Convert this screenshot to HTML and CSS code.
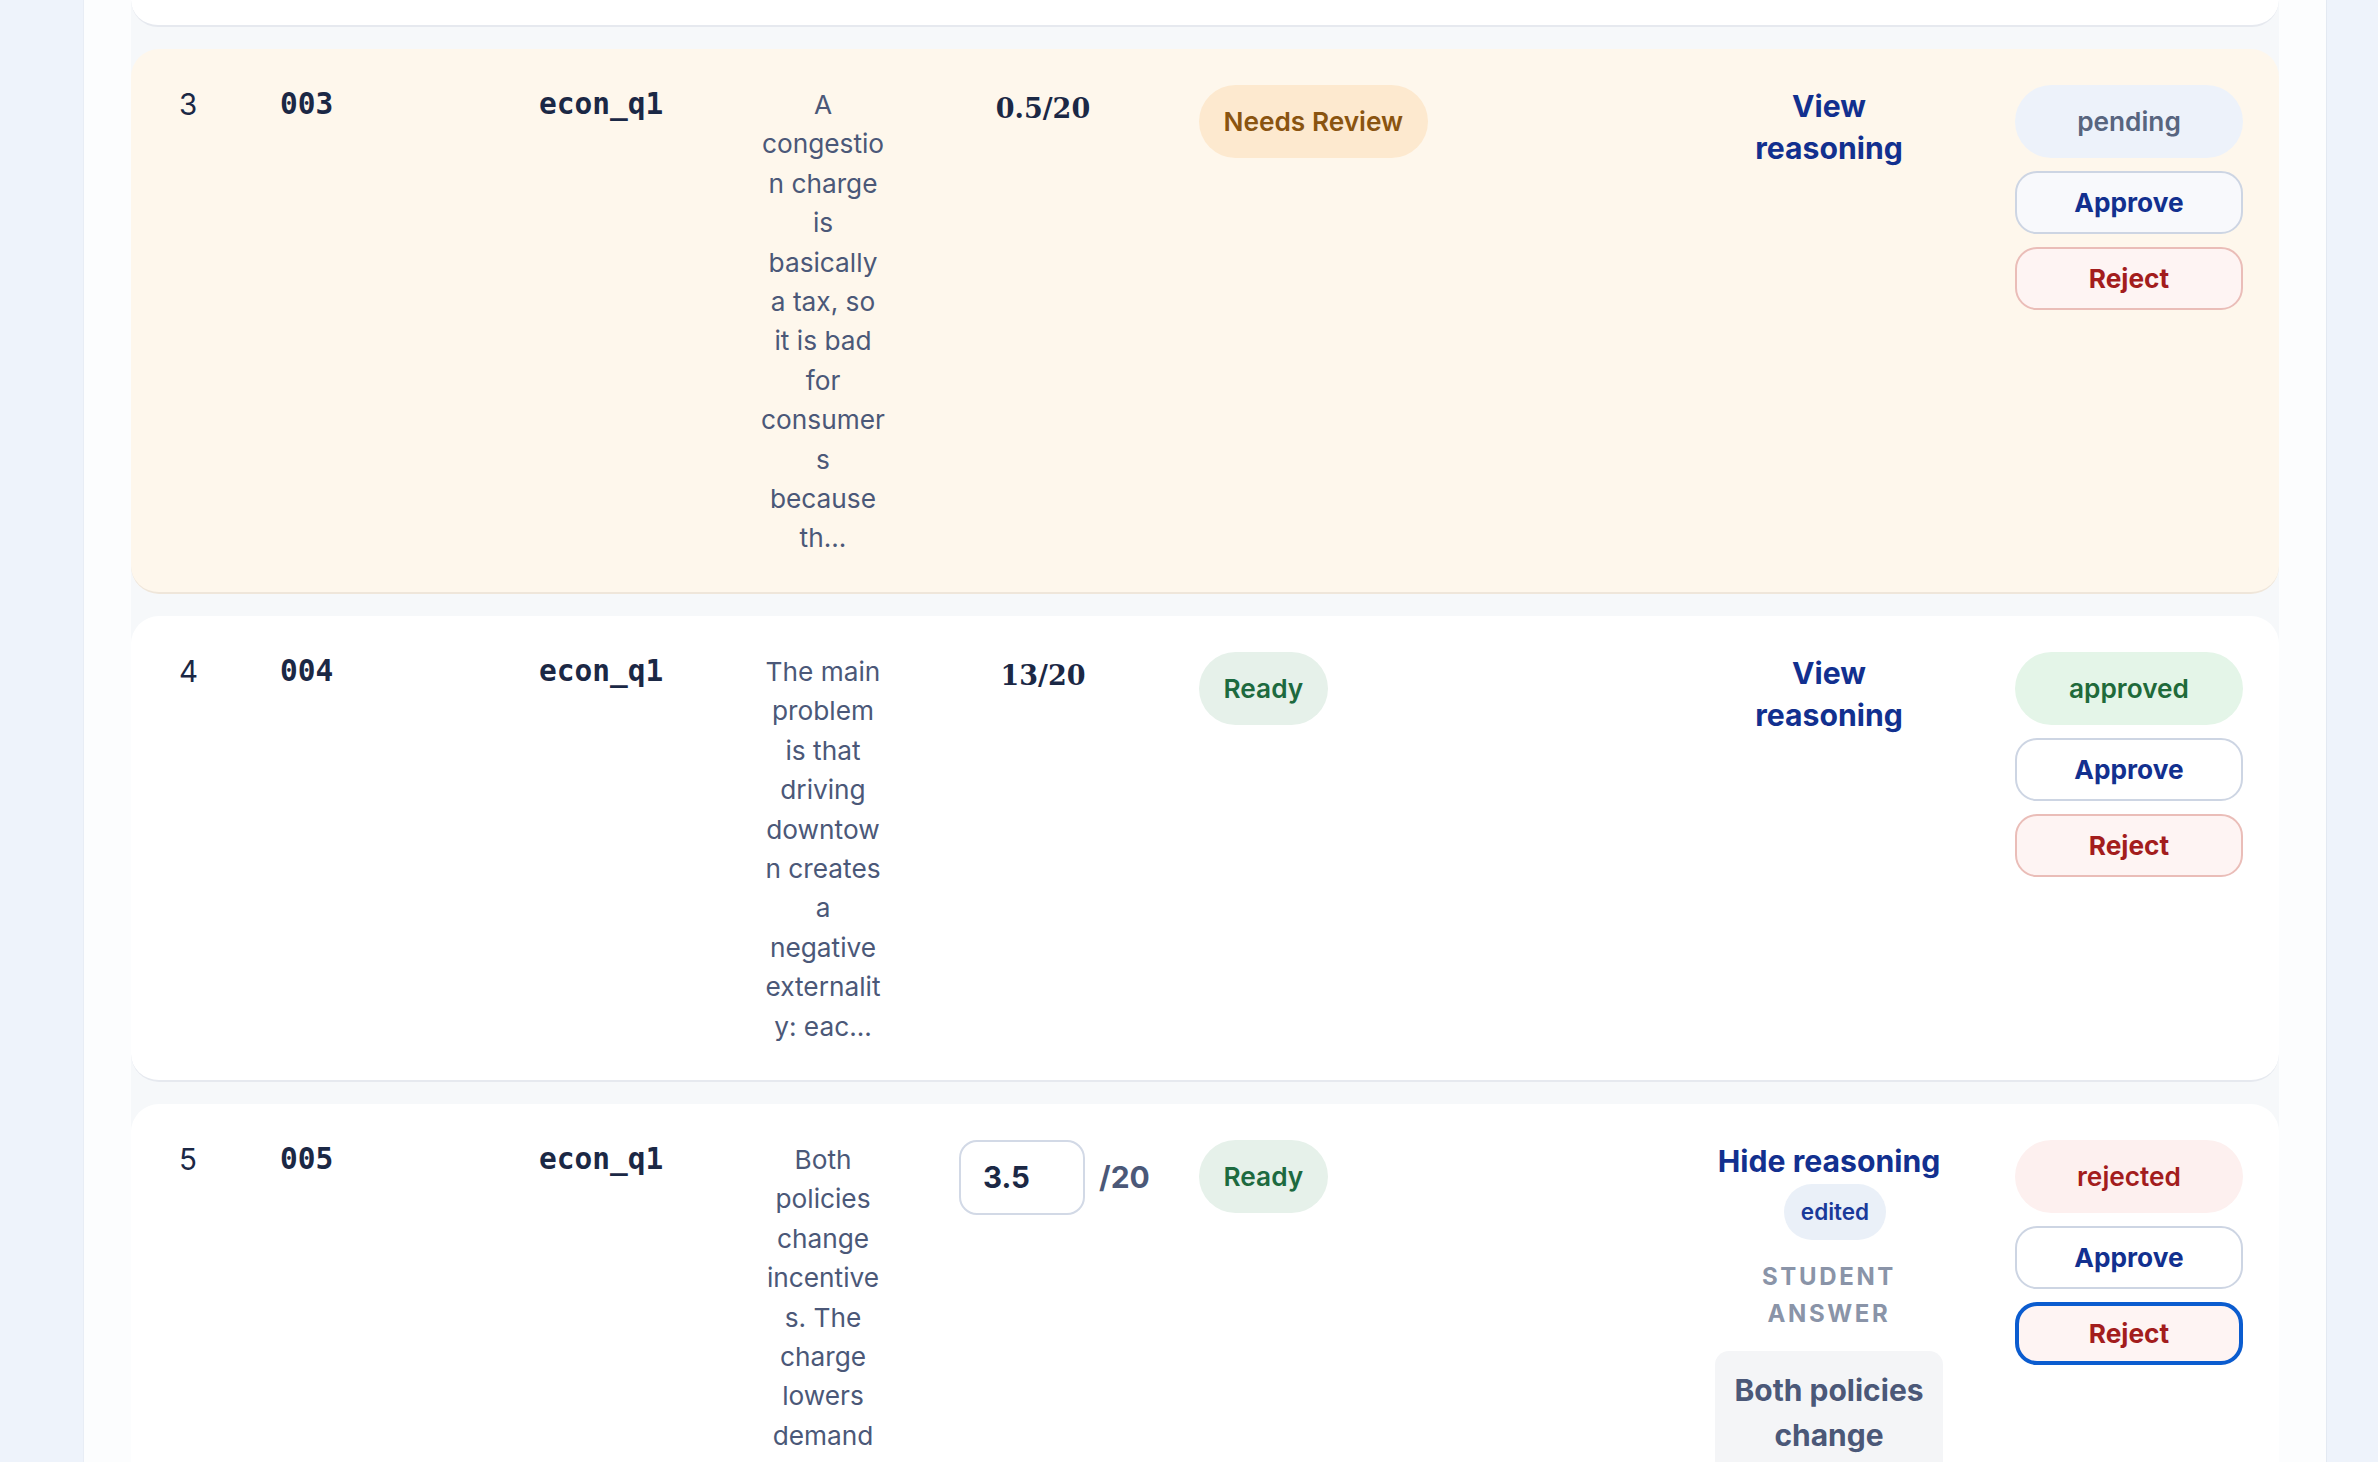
FILE: index.html
```html
<!DOCTYPE html>
<html lang="en">
<head>
<meta charset="utf-8">
<title>Grading review</title>
<link rel="stylesheet" href="styles.css">
</head>
<body>
<div class="page">
  <main class="panel">
    <div class="list">
      <div class="row-prev"></div>

      <div class="row row-flag">
        <div class="c-num">3</div>
        <div class="c-id">003</div>
        <div class="c-q">econ_q1</div>
        <div class="c-ans">A congestion charge is basically a tax, so it is bad for consumers because th...</div>
        <div class="c-score"><span class="score">0.5/20</span></div>
        <div class="c-status"><span class="pill pill-warn">Needs Review</span></div>
        <div class="c-reason"><a class="link link-narrow">View reasoning</a></div>
        <div class="c-actions">
          <span class="pill pill-pending">pending</span>
          <button class="btn btn-approve btn-approve-soft">Approve</button>
          <button class="btn btn-reject">Reject</button>
        </div>
      </div>

      <div class="row">
        <div class="c-num">4</div>
        <div class="c-id">004</div>
        <div class="c-q">econ_q1</div>
        <div class="c-ans">The main problem is that driving downtown creates a negative externality: eac...</div>
        <div class="c-score"><span class="score">13/20</span></div>
        <div class="c-status"><span class="pill pill-ready">Ready</span></div>
        <div class="c-reason"><a class="link link-narrow">View reasoning</a></div>
        <div class="c-actions">
          <span class="pill pill-approved">approved</span>
          <button class="btn btn-approve">Approve</button>
          <button class="btn btn-reject">Reject</button>
        </div>
      </div>

      <div class="row">
        <div class="c-num">5</div>
        <div class="c-id">005</div>
        <div class="c-q">econ_q1</div>
        <div class="c-ans">Both policies change incentives. The charge lowers demand for road space at peak ti...</div>
        <div class="c-score"><span class="score-edit"><input class="score-input" type="text" value="3.5"><span class="score-max">/20</span></span></div>
        <div class="c-status"><span class="pill pill-ready">Ready</span></div>
        <div class="c-reason">
          <a class="link">Hide reasoning</a>
          <span class="tag-edited">edited</span>
          <div class="label">Student answer</div>
          <div class="answer-box">Both policies change incentives. The charge lowers demand for road space at peak times, while the subsidy makes transit cheaper.</div>
        </div>
        <div class="c-actions">
          <span class="pill pill-rejected">rejected</span>
          <button class="btn btn-approve">Approve</button>
          <button class="btn btn-reject btn-focus">Reject</button>
        </div>
      </div>
    </div>
  </main>
</div>
</body>
</html>
```

FILE: styles.css
```css
* { box-sizing: border-box; }

html, body {
  margin: 0;
  height: 1462px;
  overflow: hidden;
}

body {
  background: #eef3fb;
  font-family: Inter, "Noto Sans", sans-serif;
  color: #1b2845;
}

.page {
  display: flex;
  padding-left: 83px;
  height: 1462px;
}

.panel {
  width: 2244px;
  background: #fcfdfe;
  border-left: 1px solid #e8edf5;
  border-right: 1px solid #e3e9f2;
  padding: 0 47px;
}

.list {
  display: flex;
  flex-direction: column;
  gap: 22px;
  background: #f6f8fa;
}

.row-prev {
  height: 27px;
  background: #ffffff;
  border-bottom: 2px solid #e6e9ef;
  border-radius: 0 0 28px 28px;
}

.row {
  display: grid;
  grid-template-columns: 101px 259px 221px 126px 313px 516px 228px 300px;
  align-items: start;
  padding: 36px 36px 34px 48px;
  background: #ffffff;
  border-bottom: 2px solid #e6e9ef;
  border-radius: 28px;
  line-height: 39.4px;
}

.row-flag {
  background: #fef7ec;
  border-bottom-color: #efe6da;
}

.c-num {
  font-size: 29.5px;
  font-weight: 400;
  color: #1b2845;
}

.c-id, .c-q {
  font-family: "DejaVu Sans Mono", "Liberation Mono", monospace;
  font-weight: 700;
  font-size: 29.5px;
  color: #1b2845;
}

.c-ans {
  font-size: 26.25px;
  color: #4b5878;
  text-align: center;
  overflow-wrap: anywhere;
}

.c-score {
  padding: 0 72px 0 73px;
  text-align: center;
  white-space: nowrap;
}

.score {
  display: block;
  padding-top: 4px;
  font-family: "DejaVu Serif", "Liberation Serif", serif;
  font-weight: 700;
  font-size: 27px;
  color: #1b2845;
}

.score-edit {
  display: inline-flex;
  align-items: center;
  gap: 14px;
}

.score-input {
  width: 126px;
  height: 75px;
  border: 2px solid #d2d9e6;
  border-radius: 18px;
  background: #ffffff;
  padding: 0 22px;
  font-family: Inter, sans-serif;
  font-weight: 700;
  font-size: 29.5px;
  color: #1b2845;
  outline: none;
}

.score-max {
  font-weight: 700;
  font-size: 30px;
  color: #4b5878;
}

.pill {
  display: inline-block;
  padding: 17px 24.5px;
  border-radius: 999px;
  font-weight: 600;
  font-size: 26.25px;
  line-height: 39.4px;
  white-space: nowrap;
  text-align: center;
}

.pill-warn { background: #fde9cf; color: #8a5410; }
.pill-ready { background: #e6f1ea; color: #1d6a3f; }
.pill-pending { background: #edf2fa; color: #58657f; }
.pill-approved { background: #e4f5e8; color: #1f6a3a; }
.pill-rejected { background: #fdf0ef; color: #a31d1d; }

.c-reason {
  display: flex;
  flex-direction: column;
  align-items: center;
  text-align: center;
}

.link {
  font-weight: 700;
  font-size: 30.2px;
  line-height: 42px;
  color: #12308f;
  cursor: pointer;
}

.link-narrow {
  max-width: 160px;
}

.tag-edited {
  margin: 2px 0 0 12px;
  padding: 9px 17px;
  border-radius: 999px;
  background: #eaf0f8;
  color: #1a3a9a;
  font-weight: 600;
  font-size: 22.5px;
  line-height: 38px;
}

.label {
  margin-top: 18px;
  font-weight: 700;
  font-size: 24px;
  line-height: 37px;
  letter-spacing: 0.11em;
  text-transform: uppercase;
  color: #8a94a8;
  width: 200px;
}

.answer-box {
  margin-top: 19px;
  width: 228px;
  padding: 17px 18px;
  border-radius: 14px;
  background: #f4f5f7;
  font-weight: 700;
  font-size: 30px;
  line-height: 45px;
  color: #4b5878;
}

.c-actions {
  display: flex;
  flex-direction: column;
  gap: 13px;
  padding-left: 72px;
}

.c-actions .pill {
  display: block;
}

.btn {
  height: 63px;
  border-radius: 22px;
  border: 2px solid;
  font-family: Inter, sans-serif;
  font-weight: 700;
  font-size: 26.25px;
  cursor: pointer;
}

.btn-approve {
  background: #ffffff;
  border-color: #cdd5e3;
  color: #12308f;
}

.btn-approve-soft { background: #f8f9fc; }

.btn-reject {
  background: #fef4f3;
  border-color: #eabdb8;
  color: #a31d1d;
}

.btn-focus {
  border: 4px solid #0b5ccf;
}
```
